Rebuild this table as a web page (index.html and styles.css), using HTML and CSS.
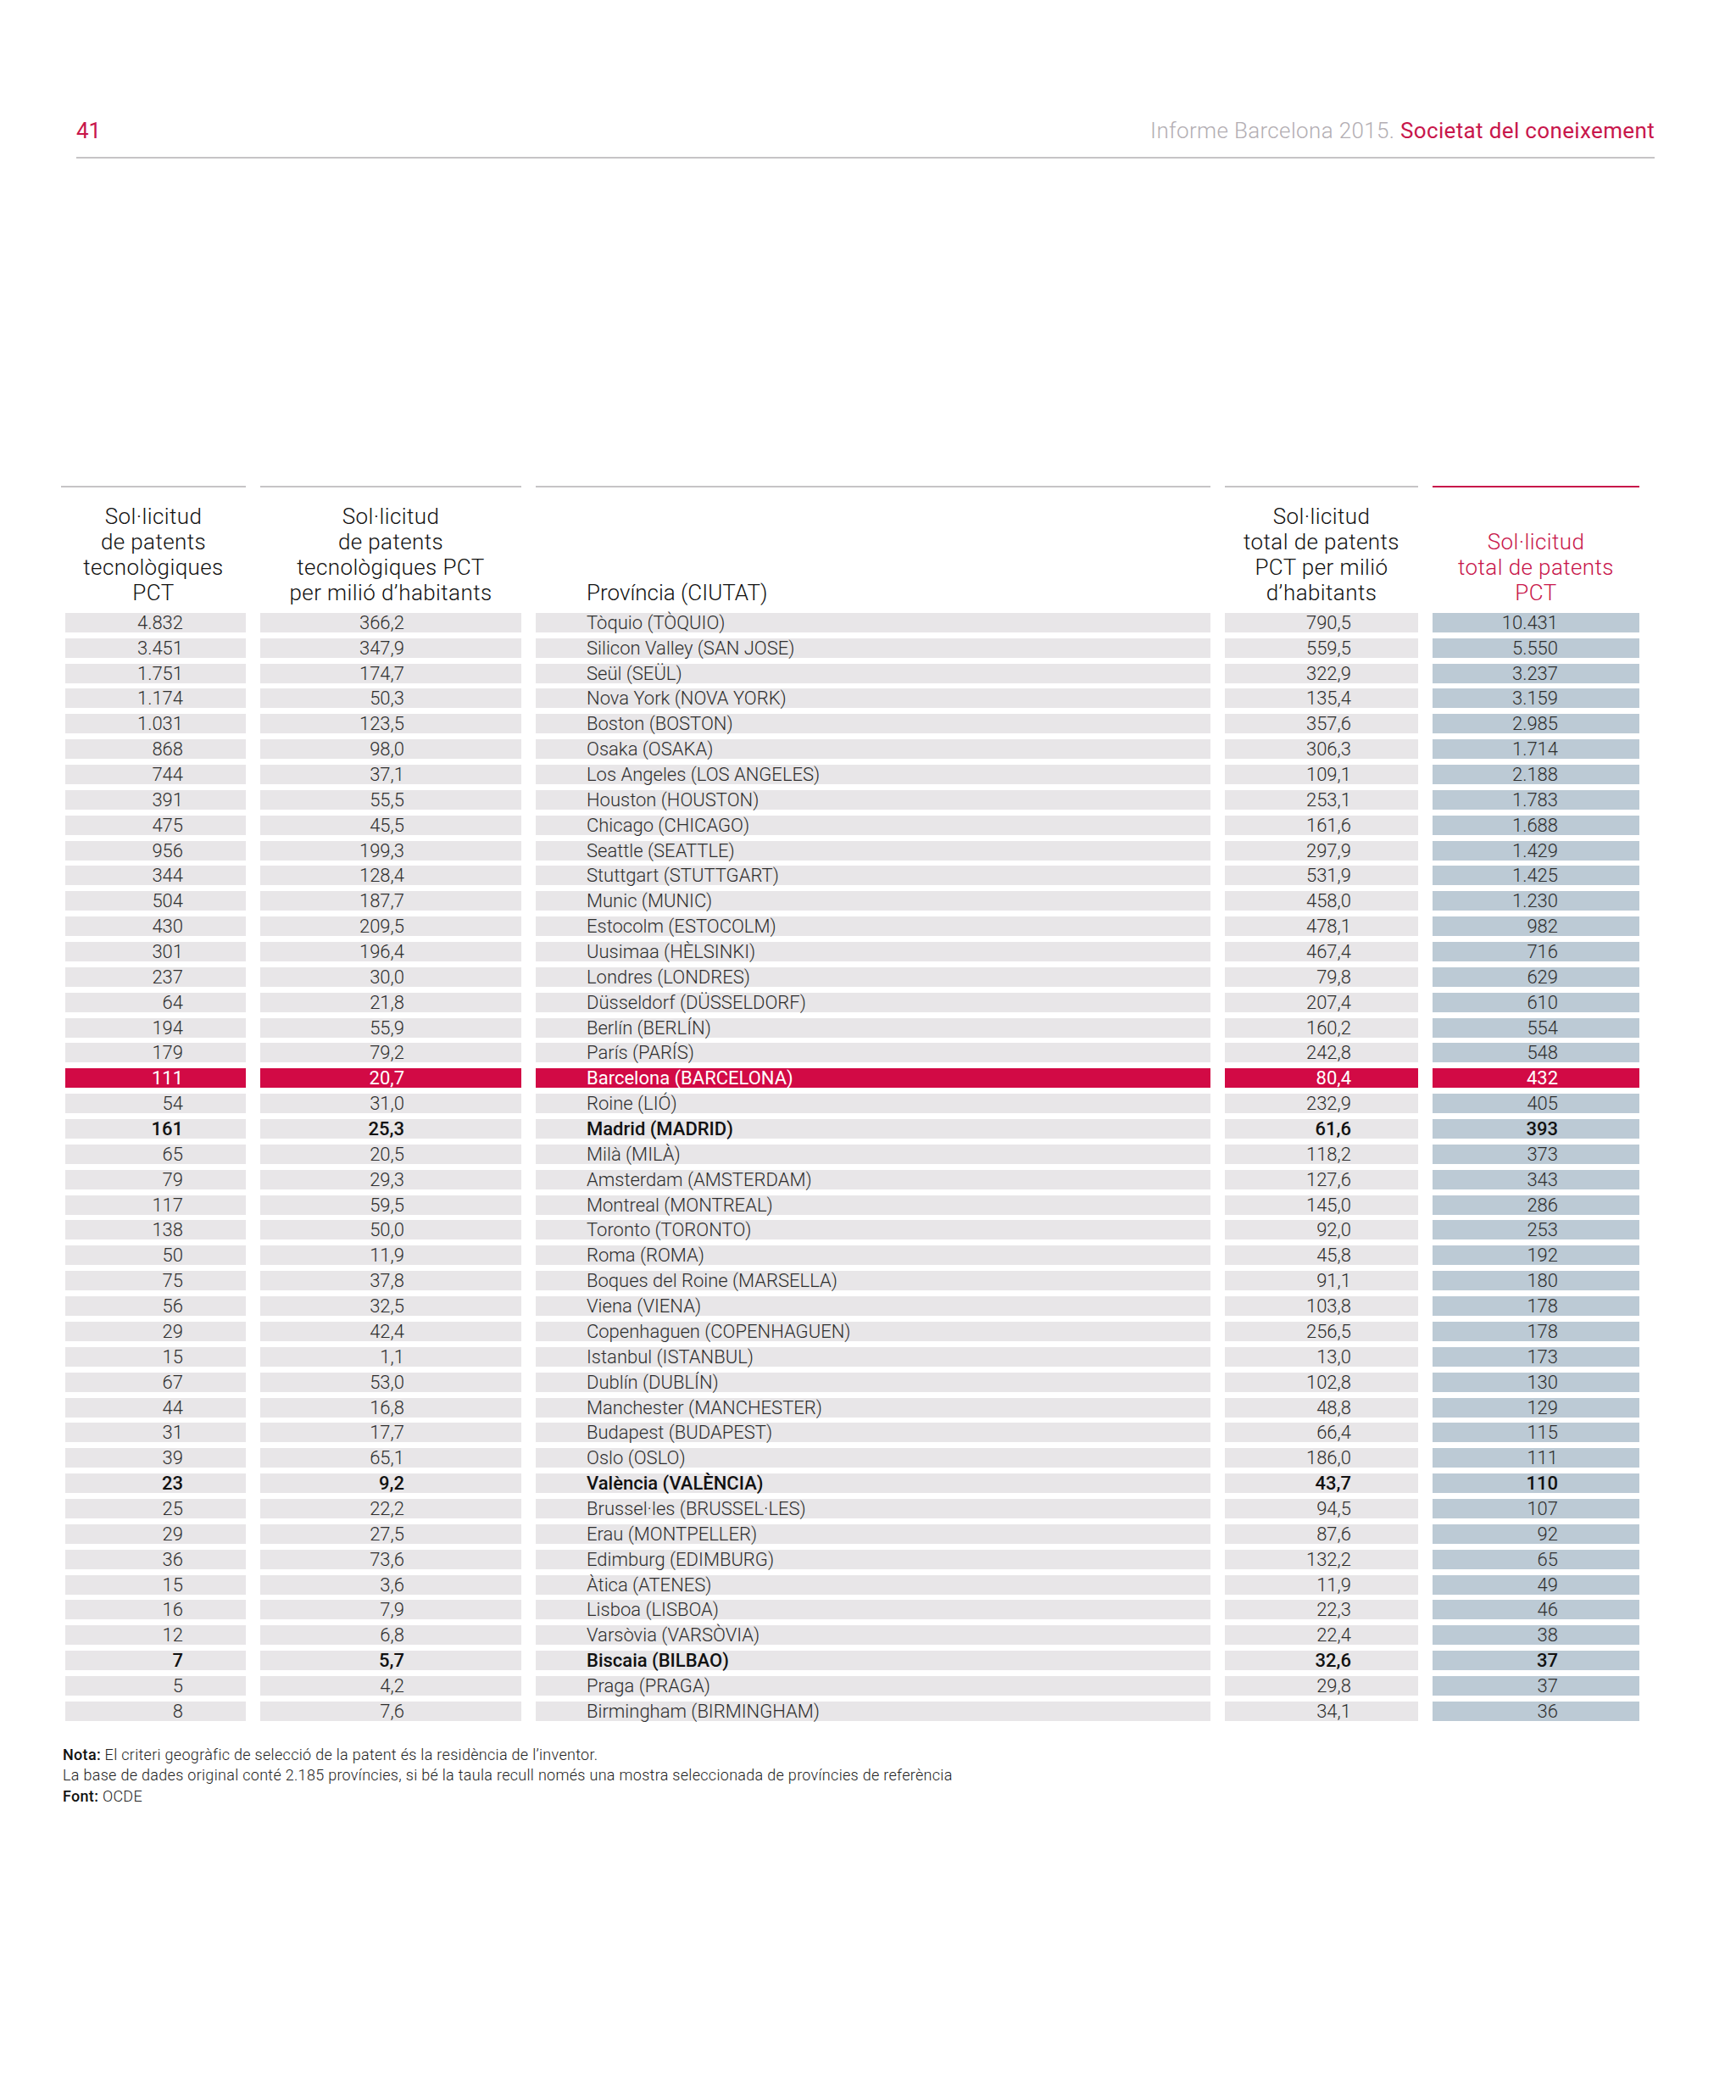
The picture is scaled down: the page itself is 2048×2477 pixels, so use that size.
FILE: index.html
```html
<!DOCTYPE html>
<html lang="ca">
<head>
<meta charset="utf-8">
<title>Informe Barcelona 2015. Societat del coneixement</title>
<link rel="stylesheet" href="styles.css">
</head>
<body>
<header class="page-head">
  <span class="page-num">41</span>
  <span class="page-title"><span class="grey">Informe Barcelona 2015.</span> <span class="red">Societat del coneixement</span></span>
</header>

<div class="tbl">
  <div class="th c1">Sol·licitud<br>de patents<br>tecnològiques<br>PCT</div>
  <div class="th c2">Sol·licitud<br>de patents<br>tecnològiques PCT<br>per milió d’habitants</div>
  <div class="th c3">Província (CIUTAT)</div>
  <div class="th c4">Sol·licitud<br>total de patents<br>PCT per milió<br>d’habitants</div>
  <div class="th c5">Sol·licitud<br>total de patents<br>PCT</div>

  <div class="td c1">4.832</div><div class="td c2">366,2</div><div class="td c3">Tòquio (TÒQUIO)</div><div class="td c4">790,5</div><div class="td c5">10.431</div>
  <div class="td c1">3.451</div><div class="td c2">347,9</div><div class="td c3">Silicon Valley (SAN JOSE)</div><div class="td c4">559,5</div><div class="td c5">5.550</div>
  <div class="td c1">1.751</div><div class="td c2">174,7</div><div class="td c3">Seül (SEÜL)</div><div class="td c4">322,9</div><div class="td c5">3.237</div>
  <div class="td c1">1.174</div><div class="td c2">50,3</div><div class="td c3">Nova York (NOVA YORK)</div><div class="td c4">135,4</div><div class="td c5">3.159</div>
  <div class="td c1">1.031</div><div class="td c2">123,5</div><div class="td c3">Boston (BOSTON)</div><div class="td c4">357,6</div><div class="td c5">2.985</div>
  <div class="td c1">868</div><div class="td c2">98,0</div><div class="td c3">Osaka (OSAKA)</div><div class="td c4">306,3</div><div class="td c5">1.714</div>
  <div class="td c1">744</div><div class="td c2">37,1</div><div class="td c3">Los Angeles (LOS ANGELES)</div><div class="td c4">109,1</div><div class="td c5">2.188</div>
  <div class="td c1">391</div><div class="td c2">55,5</div><div class="td c3">Houston (HOUSTON)</div><div class="td c4">253,1</div><div class="td c5">1.783</div>
  <div class="td c1">475</div><div class="td c2">45,5</div><div class="td c3">Chicago (CHICAGO)</div><div class="td c4">161,6</div><div class="td c5">1.688</div>
  <div class="td c1">956</div><div class="td c2">199,3</div><div class="td c3">Seattle (SEATTLE)</div><div class="td c4">297,9</div><div class="td c5">1.429</div>
  <div class="td c1">344</div><div class="td c2">128,4</div><div class="td c3">Stuttgart (STUTTGART)</div><div class="td c4">531,9</div><div class="td c5">1.425</div>
  <div class="td c1">504</div><div class="td c2">187,7</div><div class="td c3">Munic (MUNIC)</div><div class="td c4">458,0</div><div class="td c5">1.230</div>
  <div class="td c1">430</div><div class="td c2">209,5</div><div class="td c3">Estocolm (ESTOCOLM)</div><div class="td c4">478,1</div><div class="td c5">982</div>
  <div class="td c1">301</div><div class="td c2">196,4</div><div class="td c3">Uusimaa (HÈLSINKI)</div><div class="td c4">467,4</div><div class="td c5">716</div>
  <div class="td c1">237</div><div class="td c2">30,0</div><div class="td c3">Londres (LONDRES)</div><div class="td c4">79,8</div><div class="td c5">629</div>
  <div class="td c1">64</div><div class="td c2">21,8</div><div class="td c3">Düsseldorf (DÜSSELDORF)</div><div class="td c4">207,4</div><div class="td c5">610</div>
  <div class="td c1">194</div><div class="td c2">55,9</div><div class="td c3">Berlín (BERLÍN)</div><div class="td c4">160,2</div><div class="td c5">554</div>
  <div class="td c1">179</div><div class="td c2">79,2</div><div class="td c3">París (PARÍS)</div><div class="td c4">242,8</div><div class="td c5">548</div>
  <div class="td c1 hl">111</div><div class="td c2 hl">20,7</div><div class="td c3 hl">Barcelona (BARCELONA)</div><div class="td c4 hl">80,4</div><div class="td c5 hl">432</div>
  <div class="td c1">54</div><div class="td c2">31,0</div><div class="td c3">Roine (LIÓ)</div><div class="td c4">232,9</div><div class="td c5">405</div>
  <div class="td c1 b">161</div><div class="td c2 b">25,3</div><div class="td c3 b">Madrid (MADRID)</div><div class="td c4 b">61,6</div><div class="td c5 b">393</div>
  <div class="td c1">65</div><div class="td c2">20,5</div><div class="td c3">Milà (MILÀ)</div><div class="td c4">118,2</div><div class="td c5">373</div>
  <div class="td c1">79</div><div class="td c2">29,3</div><div class="td c3">Amsterdam (AMSTERDAM)</div><div class="td c4">127,6</div><div class="td c5">343</div>
  <div class="td c1">117</div><div class="td c2">59,5</div><div class="td c3">Montreal (MONTREAL)</div><div class="td c4">145,0</div><div class="td c5">286</div>
  <div class="td c1">138</div><div class="td c2">50,0</div><div class="td c3">Toronto (TORONTO)</div><div class="td c4">92,0</div><div class="td c5">253</div>
  <div class="td c1">50</div><div class="td c2">11,9</div><div class="td c3">Roma (ROMA)</div><div class="td c4">45,8</div><div class="td c5">192</div>
  <div class="td c1">75</div><div class="td c2">37,8</div><div class="td c3">Boques del Roine (MARSELLA)</div><div class="td c4">91,1</div><div class="td c5">180</div>
  <div class="td c1">56</div><div class="td c2">32,5</div><div class="td c3">Viena (VIENA)</div><div class="td c4">103,8</div><div class="td c5">178</div>
  <div class="td c1">29</div><div class="td c2">42,4</div><div class="td c3">Copenhaguen (COPENHAGUEN)</div><div class="td c4">256,5</div><div class="td c5">178</div>
  <div class="td c1">15</div><div class="td c2">1,1</div><div class="td c3">Istanbul (ISTANBUL)</div><div class="td c4">13,0</div><div class="td c5">173</div>
  <div class="td c1">67</div><div class="td c2">53,0</div><div class="td c3">Dublín (DUBLÍN)</div><div class="td c4">102,8</div><div class="td c5">130</div>
  <div class="td c1">44</div><div class="td c2">16,8</div><div class="td c3">Manchester (MANCHESTER)</div><div class="td c4">48,8</div><div class="td c5">129</div>
  <div class="td c1">31</div><div class="td c2">17,7</div><div class="td c3">Budapest (BUDAPEST)</div><div class="td c4">66,4</div><div class="td c5">115</div>
  <div class="td c1">39</div><div class="td c2">65,1</div><div class="td c3">Oslo (OSLO)</div><div class="td c4">186,0</div><div class="td c5">111</div>
  <div class="td c1 b">23</div><div class="td c2 b">9,2</div><div class="td c3 b">València (VALÈNCIA)</div><div class="td c4 b">43,7</div><div class="td c5 b">110</div>
  <div class="td c1">25</div><div class="td c2">22,2</div><div class="td c3">Brussel·les (BRUSSEL·LES)</div><div class="td c4">94,5</div><div class="td c5">107</div>
  <div class="td c1">29</div><div class="td c2">27,5</div><div class="td c3">Erau (MONTPELLER)</div><div class="td c4">87,6</div><div class="td c5">92</div>
  <div class="td c1">36</div><div class="td c2">73,6</div><div class="td c3">Edimburg (EDIMBURG)</div><div class="td c4">132,2</div><div class="td c5">65</div>
  <div class="td c1">15</div><div class="td c2">3,6</div><div class="td c3">Àtica (ATENES)</div><div class="td c4">11,9</div><div class="td c5">49</div>
  <div class="td c1">16</div><div class="td c2">7,9</div><div class="td c3">Lisboa (LISBOA)</div><div class="td c4">22,3</div><div class="td c5">46</div>
  <div class="td c1">12</div><div class="td c2">6,8</div><div class="td c3">Varsòvia (VARSÒVIA)</div><div class="td c4">22,4</div><div class="td c5">38</div>
  <div class="td c1 b">7</div><div class="td c2 b">5,7</div><div class="td c3 b">Biscaia (BILBAO)</div><div class="td c4 b">32,6</div><div class="td c5 b">37</div>
  <div class="td c1">5</div><div class="td c2">4,2</div><div class="td c3">Praga (PRAGA)</div><div class="td c4">29,8</div><div class="td c5">37</div>
  <div class="td c1">8</div><div class="td c2">7,6</div><div class="td c3">Birmingham (BIRMINGHAM)</div><div class="td c4">34,1</div><div class="td c5">36</div>
</div>

<div class="notes">
  <p><strong>Nota:</strong> El criteri geogràfic de selecció de la patent és la residència de l’inventor.</p>
  <p>La base de dades original conté 2.185 províncies, si bé la taula recull només una mostra seleccionada de províncies de referència</p>
  <p><strong>Font:</strong> OCDE</p>
</div>
</body>
</html>
```

FILE: styles.css
```css
html, body {
  margin: 0;
  padding: 0;
  background: #ffffff;
}

body {
  font-family: Roboto, "Open Sans", "DejaVu Sans", sans-serif;
  color: #333333;
  width: 2048px;
  min-height: 2477px;
}

/* ---------- page header ---------- */
.page-head {
  display: flex;
  justify-content: space-between;
  align-items: baseline;
  margin: 139px 96px 0 90px;
  padding-bottom: 16px;
  border-bottom: 2px solid #c6c4c6;
  font-size: 26px;
  line-height: 30px;
  font-weight: 300;
}

.page-num {
  color: #c8164b;
  font-weight: 400;
}

.page-title {
  letter-spacing: 0.35px;
}

.page-title .grey {
  color: #b3aeb3;
}

.page-title .red {
  color: #c8164b;
  font-weight: 400;
}

/* ---------- table ---------- */
.tbl {
  display: grid;
  grid-template-columns: 213px 308px 796px 228px 244px;
  column-gap: 17px;
  row-gap: 6.86px;
  margin: 386px 0 0 77px;
  width: max-content;
}

.th {
  display: flex;
  flex-direction: column;
  justify-content: flex-end;
  border-top: 2px solid #c6c4c6;
  padding: 19px 0 2px;
  font-size: 26px;
  line-height: 30px;
  font-weight: 300;
  color: #111111;
  text-align: center;
  letter-spacing: 0.4px;
}

.th.c1 {
  margin-left: -5px;
}

.th.c3 {
  text-align: left;
  padding-left: 60px;
  letter-spacing: 0;
}

.th.c5 {
  border-top-color: #c8164b;
  color: #c8164b;
}

.td {
  height: 23px;
  font-size: 22px;
  line-height: 23px;
  font-weight: 300;
  color: #2e2e2e;
  background: #e8e6e8;
  text-align: right;
  white-space: nowrap;
}

.td.c1 { padding-right: 74px; }
.td.c2 { padding-right: 138px; }
.td.c3 { padding-left: 60px; text-align: left; }
.td.c4 { padding-right: 79px; }
.td.c5 { padding-right: 96px; background: #bccad5; }

.td.b {
  font-weight: 500;
  color: #111111;
}

.td.hl {
  background: #d20a45;
  color: #ffffff;
  font-weight: 400;
}

/* ---------- notes ---------- */
.notes {
  margin: 28px 0 0 74px;
  font-size: 18px;
  line-height: 24.5px;
  font-weight: 300;
  color: #222222;
  letter-spacing: 0.3px;
}

.notes p {
  margin: 0;
}

.notes strong {
  font-weight: 500;
  color: #111111;
}
```
